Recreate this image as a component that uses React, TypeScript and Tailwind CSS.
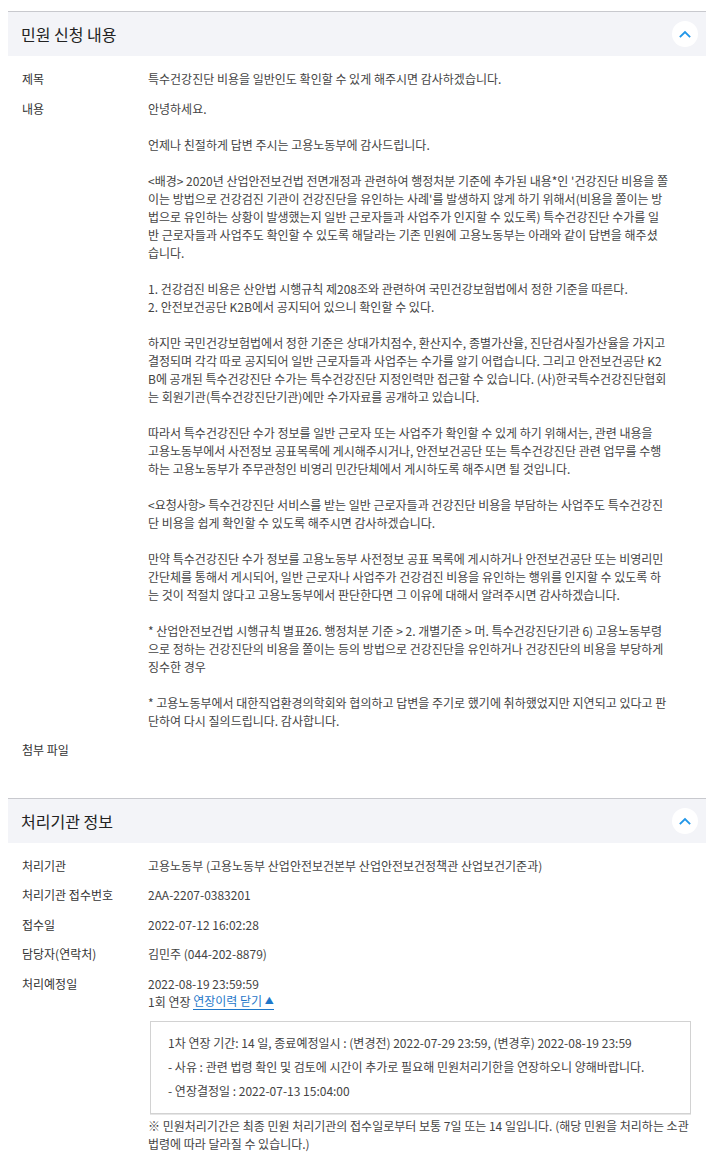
import React from "react";

const FONT = { fontFamily: '"Noto Sans CJK KR", "Noto Sans", sans-serif' };

function ChevronUp() {
  return (
    <svg width="12" height="8" viewBox="0 0 12 8" fill="none">
      <path d="M1.5 6.5 L6 2 L10.5 6.5" stroke="#2196e8" strokeWidth="1.8" strokeLinecap="square" />
    </svg>
  );
}

function SectionHeader({ title }: { title: string }) {
  return (
    <div className="flex h-[45px] items-center justify-between border-t border-[#c8c9ce] bg-[#f3f4f8] pl-[13px] pr-[8px]">
      <div className="text-[16px] text-[#222]">{title}</div>
      <div className="flex h-[26px] w-[26px] items-center justify-center rounded-full bg-white">
        <ChevronUp />
      </div>
    </div>
  );
}

function Row({ label, children }: { label: string; children?: React.ReactNode }) {
  return (
    <div className="flex pt-[6px] pb-[5.5px] text-[12px] leading-[18px]">
      <div className="w-[140px] shrink-0 pl-[14px] text-[#333]">{label}</div>
      <div className="min-w-0 flex-1 text-[#444]">{children}</div>
    </div>
  );
}

const paragraphs: string[][] = [
  ["안녕하세요."],
  ["언제나 친절하게 답변 주시는 고용노동부에 감사드립니다."],
  [
    "<배경> 2020년 산업안전보건법 전면개정과 관련하여 행정처분 기준에 추가된 내용*인 '건강진단 비용을 쫄",
    "이는 방법으로 건강검진 기관이 건강진단을 유인하는 사례'를 발생하지 않게 하기 위해서(비용을 쫄이는 방",
    "법으로 유인하는 상황이 발생했는지 일반 근로자들과 사업주가 인지할 수 있도록) 특수건강진단 수가를 일",
    "반 근로자들과 사업주도 확인할 수 있도록 해달라는 기존 민원에 고용노동부는 아래와 같이 답변을 해주셨",
    "습니다.",
  ],
  [
    "1. 건강검진 비용은 산안법 시행규칙 제208조와 관련하여 국민건강보험법에서 정한 기준을 따른다.",
    "2. 안전보건공단 K2B에서 공지되어 있으니 확인할 수 있다.",
  ],
  [
    "하지만 국민건강보험법에서 정한 기준은 상대가치점수, 환산지수, 종별가산율, 진단검사질가산율을 가지고",
    "결정되며 각각 따로 공지되어 일반 근로자들과 사업주는 수가를 알기 어렵습니다. 그리고 안전보건공단 K2",
    "B에 공개된 특수건강진단 수가는 특수건강진단 지정인력만 접근할 수 있습니다. (사)한국특수건강진단협회",
    "는 회원기관(특수건강진단기관)에만 수가자료를 공개하고 있습니다.",
  ],
  [
    "따라서 특수건강진단 수가 정보를 일반 근로자 또는 사업주가 확인할 수 있게 하기 위해서는, 관련 내용을",
    "고용노동부에서 사전정보 공표목록에 게시해주시거나, 안전보건공단 또는 특수건강진단 관련 업무를 수행",
    "하는 고용노동부가 주무관청인 비영리 민간단체에서 게시하도록 해주시면 될 것입니다.",
  ],
  [
    "<요청사항> 특수건강진단 서비스를 받는 일반 근로자들과 건강진단 비용을 부담하는 사업주도 특수건강진",
    "단 비용을 쉽게 확인할 수 있도록 해주시면 감사하겠습니다.",
  ],
  [
    "만약 특수건강진단 수가 정보를 고용노동부 사전정보 공표 목록에 게시하거나 안전보건공단 또는 비영리민",
    "간단체를 통해서 게시되어, 일반 근로자나 사업주가 건강검진 비용을 유인하는 행위를 인지할 수 있도록 하",
    "는 것이 적절치 않다고 고용노동부에서 판단한다면 그 이유에 대해서 알려주시면 감사하겠습니다.",
  ],
  [
    "* 산업안전보건법 시행규칙 별표26. 행정처분 기준 > 2. 개별기준 > 머. 특수건강진단기관 6) 고용노동부령",
    "으로 정하는 건강진단의 비용을 쫄이는 등의 방법으로 건강진단을 유인하거나 건강진단의 비용을 부당하게",
    "징수한 경우",
  ],
  [
    "* 고용노동부에서 대한직업환경의학회와 협의하고 답변을 주기로 했기에 취하했었지만 지연되고 있다고 판",
    "단하여 다시 질의드립니다. 감사합니다.",
  ],
];

export default function App() {
  return (
    <div className="min-h-[1160px] bg-white pl-[8px] pr-[7px] pt-[11px]" style={FONT}>
      <section>
        <SectionHeader title="민원 신청 내용" />
        <div className="pt-[8px] pb-[33px]">
          <Row label="제목">특수건강진단 비용을 일반인도 확인할 수 있게 해주시면 감사하겠습니다.</Row>
          <Row label="내용">
            <div className="flex flex-col gap-[18px]">
              {paragraphs.map((p, i) => (
                <div key={i}>
                  {p.map((line, j) => (
                    <div key={j} className="whitespace-nowrap">
                      {line}
                    </div>
                  ))}
                </div>
              ))}
            </div>
          </Row>
          <Row label="첨부 파일" />
        </div>
      </section>

      <section>
        <SectionHeader title="처리기관 정보" />
        <div className="pt-[8px] pb-[20px]">
          <Row label="처리기관">고용노동부 (고용노동부 산업안전보건본부 산업안전보건정책관 산업보건기준과)</Row>
          <Row label="처리기관 접수번호">2AA-2207-0383201</Row>
          <Row label="접수일">2022-07-12 16:02:28</Row>
          <Row label="담당자(연락처)">김민주 (044-202-8879)</Row>
          <Row label="처리예정일">
            <div>2022-08-19 23:59:59</div>
            <div className="flex items-center">
              <span>1회 연장&nbsp;</span>
              <span className="flex items-center border-b border-[#1f77c9] leading-[16px] text-[#1f77c9]">
                연장이력 닫기&nbsp;<span className="text-[9px] leading-[16px]">▲</span>
              </span>
            </div>
            <div className="mt-[10px] ml-[2px] w-[541px] border border-[#d2d2d2] pl-[17px] pt-[9px] pb-[10px] leading-[24px] text-[#444] shadow-[0_1px_0_#e6e6e6]">
              <div>1차 연장 기간: 14 일, 종료예정일시 : (변경전) 2022-07-29 23:59, (변경후) 2022-08-19 23:59</div>
              <div>- 사유 : 관련 법령 확인 및 검토에 시간이 추가로 필요해 민원처리기한을 연장하오니 양해바랍니다.</div>
              <div>- 연장결정일 : 2022-07-13 15:04:00</div>
            </div>
            <div className="mt-[3px]">
              <div className="whitespace-nowrap">※ 민원처리기간은 최종 민원 처리기관의 접수일로부터 보통 7일 또는 14 일입니다. (해당 민원을 처리하는 소관</div>
              <div>법령에 따라 달라질 수 있습니다.)</div>
            </div>
          </Row>
        </div>
      </section>
    </div>
  );
}
